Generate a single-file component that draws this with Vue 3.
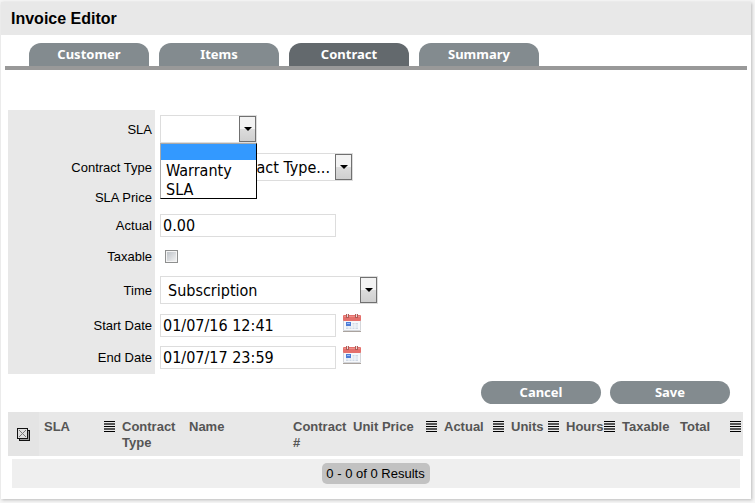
<script setup>
import { ref } from 'vue'

const tabs = ['Customer', 'Items', 'Contract', 'Summary']
const activeTab = ref('Contract')

const slaOptions = ['', 'Warranty', 'SLA']
const sla = ref('')
const contractType = ref('')
const actual = ref('0.00')
const taxable = ref(false)
const time = ref('Subscription')
const startDate = ref('01/07/16 12:41')
const endDate = ref('01/07/17 23:59')

const columns = [
  { label: 'SLA', width: 78, sortable: true },
  { label: 'Contract Type', width: 67 },
  { label: 'Name', width: 104 },
  { label: 'Contract #', width: 60 },
  { label: 'Unit Price', width: 91, sortable: true },
  { label: 'Actual', width: 67, sortable: true },
  { label: 'Units', width: 55, sortable: true },
  { label: 'Hours', width: 56, sortable: true },
  { label: 'Taxable', width: 58 },
  { label: 'Total', width: 68, sortable: true }
]
</script>

<template>
  <main class="panel">
    <header class="title-bar"><h1>Invoice Editor</h1></header>

    <nav class="tabs">
      <button
        v-for="tab in tabs"
        :key="tab"
        type="button"
        class="pill tab"
        :class="{ active: tab === activeTab }"
        @click="activeTab = tab"
      >{{ tab }}</button>
    </nav>

    <form class="form" @submit.prevent>
      <div class="row tall">
        <label for="sla">SLA</label>
        <div class="field">
          <div class="select sla-select">
            <select id="sla" v-model="sla">
              <option v-for="o in slaOptions" :key="o" :value="o">{{ o }}</option>
            </select>
            <span class="arrow"></span>
            <ul class="menu">
              <li v-for="o in slaOptions" :key="o" :class="{ chosen: o === sla }">{{ o }}</li>
            </ul>
          </div>
        </div>
      </div>
      <div class="row tall">
        <label for="type">Contract Type</label>
        <div class="field">
          <div class="select type-select">
            <select id="type" v-model="contractType">
              <option value="">Select Contract Type...</option>
            </select>
            <span class="arrow"></span>
          </div>
        </div>
      </div>
      <div class="row price">
        <span class="caption">SLA Price</span>
        <div class="field"></div>
      </div>
      <div class="row">
        <label for="actual">Actual</label>
        <div class="field"><input id="actual" v-model="actual" class="text" type="text"></div>
      </div>
      <div class="row check">
        <label for="taxable">Taxable</label>
        <div class="field"><input id="taxable" v-model="taxable" class="box" type="checkbox"></div>
      </div>
      <div class="row time">
        <label for="time">Time</label>
        <div class="field">
          <div class="select time-select">
            <select id="time" v-model="time"><option>Subscription</option></select>
            <span class="arrow"></span>
          </div>
        </div>
      </div>
      <div class="row date">
        <label for="start">Start Date</label>
        <div class="field">
          <input id="start" v-model="startDate" class="text" type="text">
          <button type="button" class="calendar" aria-label="Pick start date">
            <svg width="18" height="20"><use href="#calendar-icon" /></svg>
          </button>
        </div>
      </div>
      <div class="row date">
        <label for="end">End Date</label>
        <div class="field">
          <input id="end" v-model="endDate" class="text" type="text">
          <button type="button" class="calendar" aria-label="Pick end date">
            <svg width="18" height="20"><use href="#calendar-icon" /></svg>
          </button>
        </div>
      </div>
    </form>

    <div class="actions">
      <button type="button" class="pill">Cancel</button>
      <button type="button" class="pill">Save</button>
    </div>

    <table class="grid">
      <colgroup>
        <col style="width: 31px">
        <col v-for="c in columns" :key="c.label" :style="{ width: c.width + 'px' }">
      </colgroup>
      <thead>
        <tr>
          <th class="all">
            <button type="button" class="select-all" aria-label="Select all">
              <svg width="13" height="13" viewBox="0 0 13 13" shape-rendering="crispEdges">
                <path d="M2 2h11v11H2z" fill="#111" />
                <path d="M3 3h9v9H3z" fill="#999" />
                <path d="M0 0h11v11H0z" fill="#111" />
                <path d="M1 1h9v9H1z" fill="#ddd" />
                <path d="M2 2l7 7M9 2L2 9" stroke="#777" shape-rendering="auto" />
              </svg>
            </button>
          </th>
          <th v-for="c in columns" :key="c.label">
            <div class="head">
              <span>{{ c.label }}</span>
              <svg v-if="c.sortable" class="sort" width="11" height="11" shape-rendering="crispEdges">
                <path d="M0 0h11v1H0zM0 5h11v1H0zM0 10h11v1H0z" fill="#000" />
                <path d="M0 2h11v2H0zM0 7h11v2H0z" fill="#555" />
              </svg>
            </div>
          </th>
        </tr>
      </thead>
    </table>
    <footer class="results"><span>0 - 0 of 0 Results</span></footer>

    <svg class="symbols" width="0" height="0">
      <symbol id="calendar-icon" viewBox="0 0 18 20">
        <path d="M0 18h18v1H0z" fill="#aaa39e" />
        <rect x="0" y="3" width="18" height="15" rx="1" fill="#d4d6da" />
        <path d="M1 8h16v9H1z" fill="#f6f8fb" />
        <rect x="0" y="2" width="18" height="6" rx="1" fill="#e5706c" />
        <path d="M1 3h16v1H1z" fill="#ee8f89" />
        <path d="M3 1h3v4H3zM12 1h3v4h-3z" fill="#b05a56" />
        <path d="M4 1h1v3H4zM13 1h1v3h-1z" fill="#ead8d5" />
        <path d="M3 13h12v3H3zM9 10h6v3H9z" fill="#cfd9e6" />
        <path d="M3 14h12M9 12h6" stroke="#f6f8fb" />
        <path d="M6 13v3M9 10v6M12 10v6" stroke="#f6f8fb" />
        <path d="M3 9h5v4H3z" fill="#4c7cd6" />
        <path d="M4 10h3v1H4z" fill="#9dbcf2" />
      </symbol>
    </svg>
  </main>
</template>

<style>
body {
  background: #f5f5f5;
}
</style>

<style scoped>
* {
  box-sizing: border-box;
}
.panel {
  margin: 2px 4px 4px 1px;
  padding-bottom: 11px;
  background: #fff;
  box-shadow: 1px 1px 3px #bbb;
  font: 13px/16px "Liberation Sans", Arial, sans-serif;
  color: #000;
}
.title-bar {
  height: 33px;
  padding: 0 10px;
  background: #e8e8e8;
}
h1 {
  margin: 0;
  font-size: 16px;
  line-height: 33px;
}
.tabs {
  display: flex;
  gap: 10px;
  margin: 8px 4px 40px;
  padding-left: 24px;
  border-bottom: 4px solid #999;
}
.pill {
  width: 120px;
  height: 23px;
  padding: 0;
  border: 0;
  border-radius: 12px;
  background: #838b8f;
  color: #fff;
  font: bold 13px/23px "Noto Sans", Verdana, sans-serif;
}
.tab {
  border-radius: 12px 12px 0 0;
}
.tab.active {
  background: #63696d;
}
.form {
  margin: 0 7px;
}
.row {
  display: grid;
  grid-template-columns: 147px 1fr;
  height: 34px;
}
.row.tall { height: 38px; }
.row.price { height: 22px; }
.row.check { height: 28px; }
.row.time { height: 40px; }
.row.date { height: 32px; }
label,
.caption {
  display: flex;
  align-items: center;
  justify-content: flex-end;
  padding: 1px 3px 0 0;
  background: #e8e8e8;
}
.field {
  display: flex;
  align-items: center;
  gap: 7px;
  padding-left: 5px;
}
.date label {
  padding-top: 0;
}
.date .field {
  padding-bottom: 2px;
}
.text,
select,
.menu {
  font: 16px/20px "DejaVu Sans Condensed", Tahoma, sans-serif;
  color: #000;
}
.text {
  width: 176px;
  height: 23px;
  padding: 0 2px;
  border: 1px solid #ddd;
  background: #fff;
}
.select {
  position: relative;
  height: 28px;
}
.sla-select { width: 97px; }
.type-select { width: 193px; }
.time-select { width: 218px; }
select {
  width: 100%;
  height: 100%;
  padding: 1px 20px 0 7px;
  border: 1px solid #ddd;
  border-radius: 0;
  background: #fff;
  appearance: none;
}
.arrow {
  position: absolute;
  top: 1px;
  right: 1px;
  width: 17px;
  height: 26px;
  display: grid;
  place-items: center;
  border: 1px solid #707070;
  background: linear-gradient(#f3f3f3 50%, #dcdcdc 50%, #cfcfcf);
  pointer-events: none;
}
.arrow::before {
  content: "";
  border: 4px solid transparent;
  border-top-color: #000;
  border-bottom: 0;
}
.menu {
  position: absolute;
  z-index: 1;
  top: 28px;
  left: 0;
  width: 97px;
  margin: 0;
  padding: 0;
  border: 1px solid #000;
  border-top-color: #aaa;
  border-left-color: #aaa;
  background: #fff;
  list-style: none;
}
.menu li {
  height: 19px;
  padding-left: 5px;
  line-height: 21px;
}
.menu li.chosen {
  height: 16px;
  background: #3399ff;
}
.box {
  width: 13px;
  height: 13px;
  margin: 0 0 0 5px;
  border: 1px solid #8e8f8f;
  background: linear-gradient(135deg, #b9bec4, #f6f6f6);
  box-shadow: inset 0 0 0 1px #f4f4f4;
  appearance: none;
}
.calendar,
.select-all {
  display: flex;
  padding: 0;
  border: 0;
  background: none;
}
.calendar {
  padding-bottom: 4px;
}
.actions {
  display: flex;
  justify-content: flex-end;
  gap: 9px;
  padding: 7px 21px 8px;
}
.grid {
  width: calc(100% - 15px);
  margin: 0 8px 0 7px;
  border-collapse: collapse;
  table-layout: fixed;
  background: #e8e8e8;
  color: #555;
}
th {
  height: 44px;
  padding: 7px 2px 0 5px;
  vertical-align: top;
  text-align: left;
}
th.all {
  padding: 0 0 0 9px;
  background: #e4e4e4;
  vertical-align: middle;
}
.head {
  display: flex;
  justify-content: space-between;
}
.sort {
  flex: none;
  margin-top: 2px;
}
.results {
  display: flex;
  justify-content: center;
  margin: 3px 11px 0;
  padding: 4px 0;
  background: #efefef;
}
.results span {
  padding: 0 5px 0 4px;
  border-radius: 5px;
  background: #c2c2c2;
  line-height: 21px;
}
.symbols {
  position: absolute;
}
</style>
